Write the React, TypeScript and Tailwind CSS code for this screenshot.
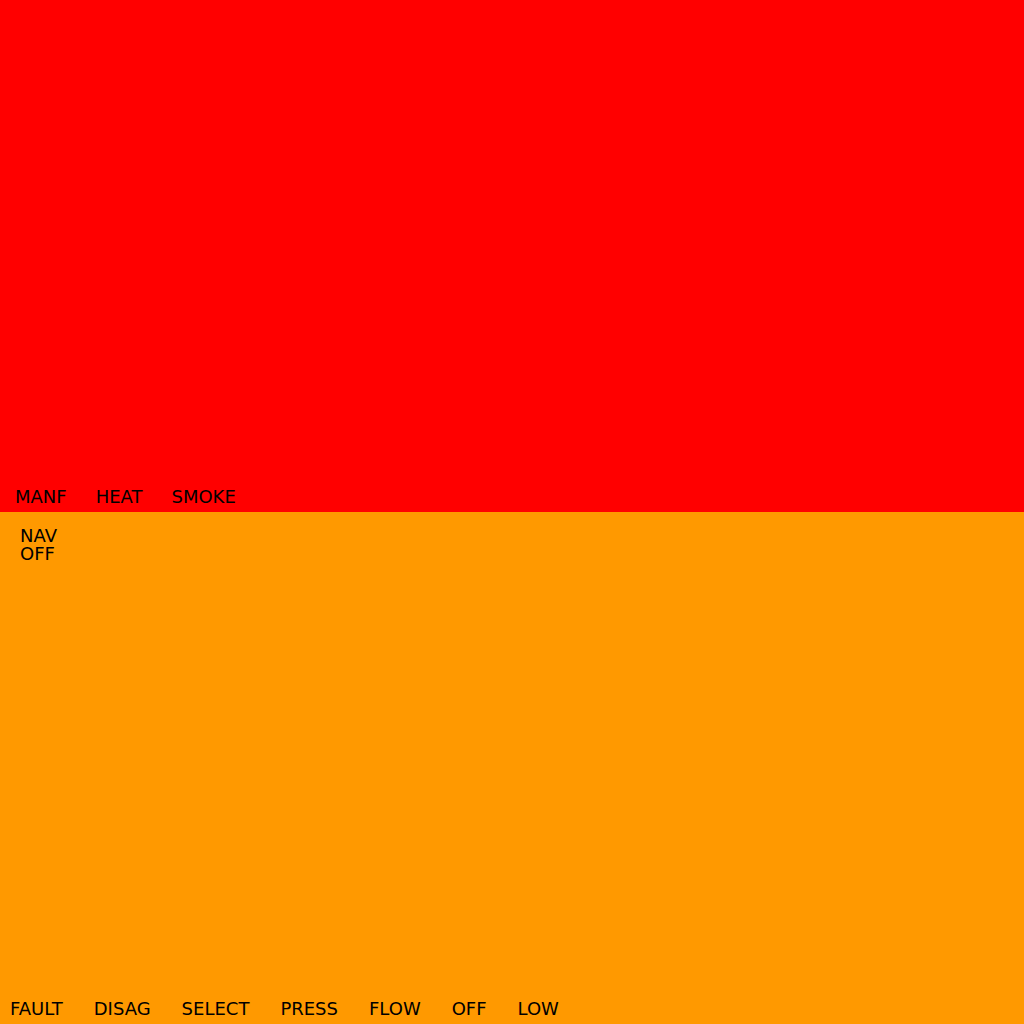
import React from 'react';

const topItems = ['MANF', 'HEAT', 'SMOKE'];
const bottomItems = ['FAULT', 'DISAG', 'SELECT', 'PRESS', 'FLOW', 'OFF', 'LOW'];

export default function App() {
  return (
    <div className="w-[1024px] h-[1024px] flex flex-col text-black text-[18px]" style={{ fontFamily: '"DejaVu Sans", sans-serif' }}>
      {/* Warning panel */}
      <div className="h-[512px] bg-[#ff0000] flex items-end pl-[15px] pb-[2px] gap-[29px]">
        {topItems.map((t) => (
          <span key={t}>{t}</span>
        ))}
      </div>

      {/* Caution panel */}
      <div className="h-[512px] bg-[#ff9900] flex flex-col justify-between">
        <p className="pl-[20px] pt-[15px] leading-[18px]">
          NAV
          <br />
          OFF
        </p>
        <div className="flex pl-[10px] pb-[2px] gap-[31px]">
          {bottomItems.map((t) => (
            <span key={t}>{t}</span>
          ))}
        </div>
      </div>
    </div>
  );
}
